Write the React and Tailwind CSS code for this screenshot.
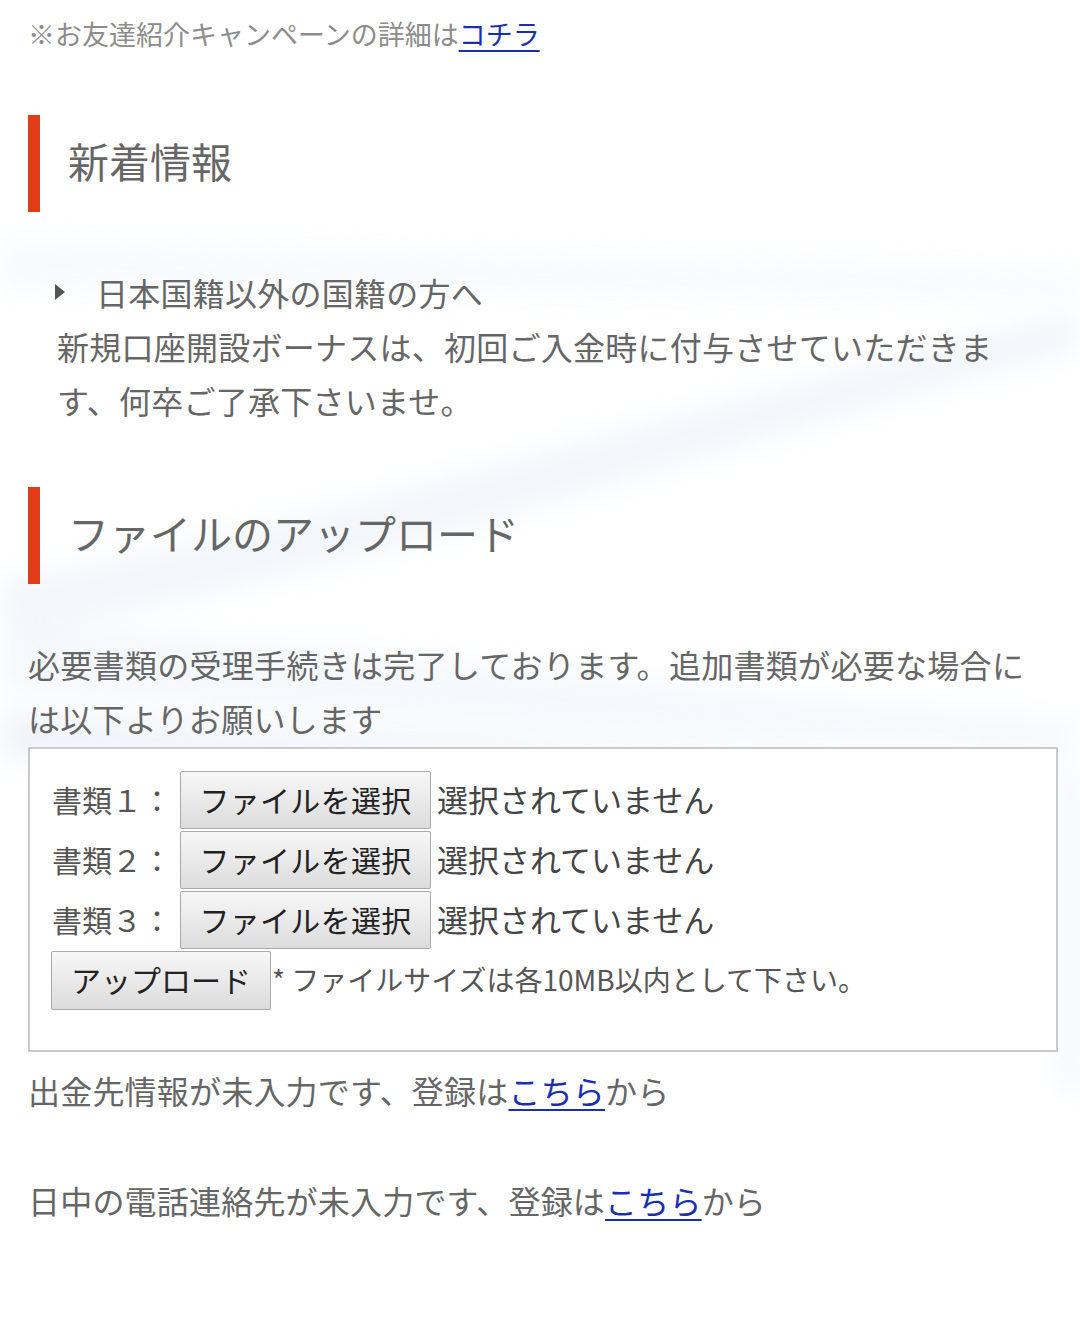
import React from "react";

function Heading({ children }) {
  return (
    <div className="flex h-[97px] items-center border-l-[12px] border-[#e23c19] pb-[6px] pl-[28px] text-[41px] leading-none text-[#666]">
      {children}
    </div>
  );
}

function FileRow({ n }) {
  return (
    <div className="flex h-[60px] items-center">
      <span className="w-[128px] pb-[2px] text-[30px] text-[#555]">書類{n}：</span>
      <button className="flex h-[58px] w-[251px] items-center justify-center rounded-[2px] border border-[#aaa] bg-[linear-gradient(#f7f7f7,#dcdcdc)] pb-[2px] text-[30px] tracking-[0.3px] text-[#222]">
        ファイルを選択
      </button>
      <span className="ml-[6px] pb-[2px] text-[31px] text-[#444]">選択されていません</span>
    </div>
  );
}

export default function App() {
  return (
    <div className="relative min-h-[1321px] w-[1080px] overflow-hidden bg-white font-['Noto_Sans_CJK_JP',sans-serif]">
      <svg className="pointer-events-none absolute inset-0 opacity-60" width="1080" height="1321" viewBox="0 0 1080 1321">
        <defs>
          <filter id="bl" x="-20%" y="-50%" width="140%" height="200%">
            <feGaussianBlur stdDeviation="14" />
          </filter>
        </defs>
        <g filter="url(#bl)">
          <path d="M0 240 L1080 270 L1080 300 L0 290 Z" fill="#f3f6fa" />
          <path d="M0 580 C 300 530, 700 400, 1080 310 L1080 350 C 700 450, 300 600, 0 630 Z" fill="#eaf0f8" />
          <path d="M0 620 C 300 640, 700 690, 1080 720 L1080 750 C 700 740, 300 710, 0 690 Z" fill="#eef3fa" />
          <path d="M0 710 C 300 730, 700 745, 1080 770 L1080 1090 L1062 1090 L1062 760 C 700 760, 300 760, 0 760 Z" fill="#e6edf7" />
        </g>
      </svg>

      <div className="relative pl-[28px]">
        <p className="pt-[14px] text-[27px] leading-[40px] text-[#8c8c8c]">
          ※お友達紹介キャンペーンの詳細は
          <a href="#" className="text-[#1a2fb0] underline decoration-2 underline-offset-[5px]">コチラ</a>
        </p>

        <div className="mt-[61px]">
          <Heading>新着情報</Heading>
        </div>

        <div className="mt-[53px] pl-[29px] text-[32px] leading-[54px] tracking-[0.25px] text-[#666]">
          <div className="flex items-center">
            <span className="ml-[-2px] mr-[31px] inline-block h-0 w-0 border-y-[8px] border-l-[10px] border-y-transparent border-l-[#555]" />
            <span>日本国籍以外の国籍の方へ</span>
          </div>
          <p className="pr-[60px]">
            新規口座開設ボーナスは、初回ご入金時に付与させていただきます、何卒ご了承下さいませ。
          </p>
        </div>

        <div className="mt-[60px]">
          <Heading>ファイルのアップロード</Heading>
        </div>

        <p className="mt-[53px] pr-[30px] text-[32px] leading-[54px] tracking-[0.3px] text-[#666]">
          必要書類の受理手続きは完了しております。追加書類が必要な場合には以下よりお願いします
        </p>

        <div className="mt-[2px] w-[1030px] border-2 border-[#cacaca] bg-white pb-[40px] pl-[22px] pt-[21px]">
          <FileRow n="１" />
          <FileRow n="２" />
          <FileRow n="３" />
          <div className="flex h-[60px] items-center">
            <button className="ml-[-1px] flex h-[59px] w-[220px] items-center justify-center rounded-[2px] border border-[#aaa] bg-[linear-gradient(#f7f7f7,#dcdcdc)] pb-[2px] text-[30px] text-[#222]">
              アップロード
            </button>
            <span className="ml-[1px] pb-[2px] text-[28px] text-[#555]">* ファイルサイズは各10MB以内として下さい。</span>
          </div>
        </div>

        <p className="mt-[11px] text-[32px] leading-[54px] tracking-[0.2px] text-[#666]">
          出金先情報が未入力です、登録は
          <a href="#" className="text-[#1a2fb0] underline decoration-2 underline-offset-[5px]">こちら</a>
          から
        </p>
        <p className="mt-[56px] text-[32px] leading-[54px] tracking-[0.2px] text-[#666]">
          日中の電話連絡先が未入力です、登録は
          <a href="#" className="text-[#1a2fb0] underline decoration-2 underline-offset-[5px]">こちら</a>
          から
        </p>
      </div>
    </div>
  );
}
